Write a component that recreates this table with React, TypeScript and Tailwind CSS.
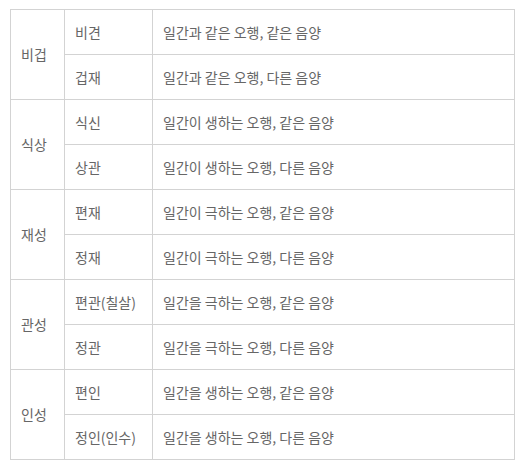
import React from 'react';

const groups = [
  {
    name: '비겁',
    rows: [
      ['비견', '일간과 같은 오행, 같은 음양'],
      ['겁재', '일간과 같은 오행, 다른 음양'],
    ],
  },
  {
    name: '식상',
    rows: [
      ['식신', '일간이 생하는 오행, 같은 음양'],
      ['상관', '일간이 생하는 오행, 다른 음양'],
    ],
  },
  {
    name: '재성',
    rows: [
      ['편재', '일간이 극하는 오행, 같은 음양'],
      ['정재', '일간이 극하는 오행, 다른 음양'],
    ],
  },
  {
    name: '관성',
    rows: [
      ['편관(칠살)', '일간을 극하는 오행, 같은 음양'],
      ['정관', '일간을 극하는 오행, 다른 음양'],
    ],
  },
  {
    name: '인성',
    rows: [
      ['편인', '일간을 생하는 오행, 같은 음양'],
      ['정인(인수)', '일간을 생하는 오행, 다른 음양'],
    ],
  },
];

const cell = 'border border-[#d3d3d3] pl-[10px] align-middle h-[45px]';

export default function App() {
  return (
    <div className="min-h-screen bg-white pt-[9px] pl-[10px] font-['Noto_Sans_CJK_KR','Noto_Sans',sans-serif] text-[14px] text-[#666]">
      <table className="border-collapse w-[505px] table-fixed">
        <colgroup>
          <col className="w-[54px]" />
          <col className="w-[88px]" />
          <col />
        </colgroup>
        <tbody>
          {groups.map((g) =>
            g.rows.map(([sub, desc], i) => (
              <tr key={g.name + sub}>
                {i === 0 && (
                  <td rowSpan={2} className={cell}>
                    {g.name}
                  </td>
                )}
                <td className={cell}>{sub}</td>
                <td className={cell}>{desc}</td>
              </tr>
            ))
          )}
        </tbody>
      </table>
    </div>
  );
}
